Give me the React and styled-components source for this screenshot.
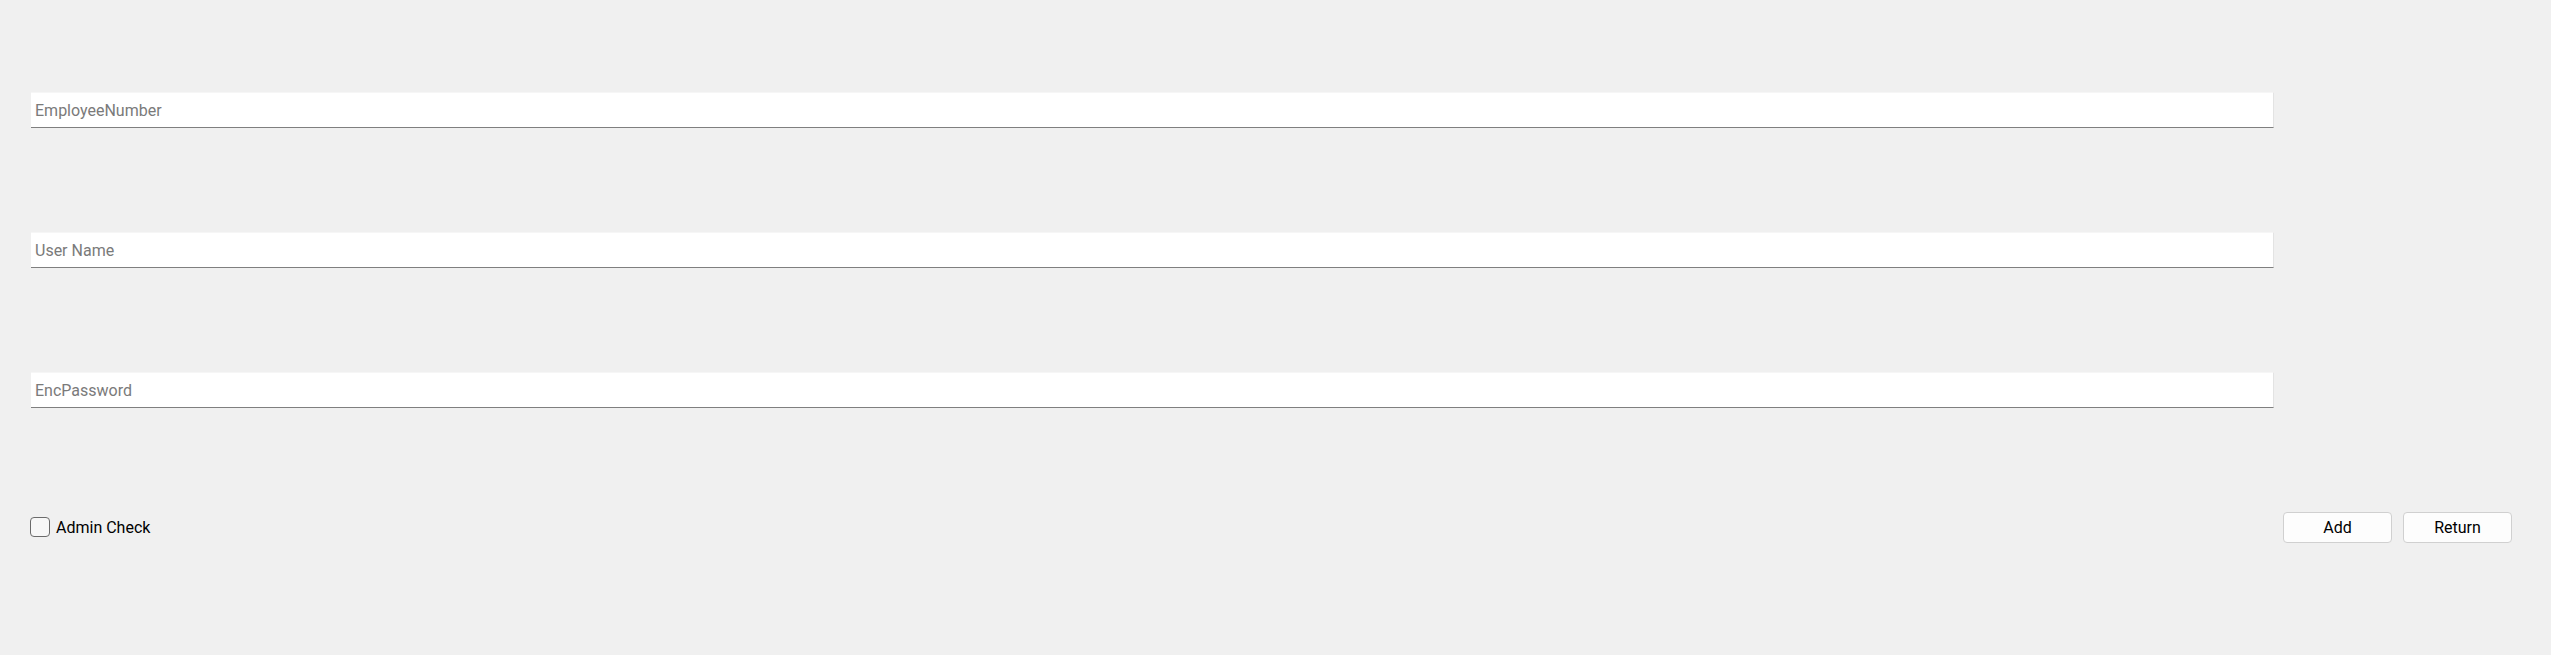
import React from "react";
import styled, { createGlobalStyle } from "styled-components";

const Global = createGlobalStyle`
  html, body { margin: 0; padding: 0; background: #f0f0f0; }
  body { font-family: Roboto, "Liberation Sans", sans-serif; }
`;

const Page = styled.div`
  width: 2551px;
  height: 655px;
  box-sizing: border-box;
  padding: 92px 39px 0 30px;
  display: flex;
  flex-direction: column;
  gap: 104px;
`;

const Field = styled.input`
  width: 2243px;
  height: 36px;
  margin: 0 0 0 1px;
  box-sizing: border-box;
  border: none;
  border-top: 1px solid #f6f6f6;
  border-right: 1px solid #e3e3e3;
  border-bottom: 1px solid #7f7f7f;
  background: #ffffff;
  padding: 1px 0 0 4px;
  font-family: Roboto, "Liberation Sans", sans-serif;
  font-size: 16px;
  color: #1a1a1a;
  outline: none;
  &::placeholder { color: #7a7a7a; }
`;

const Footer = styled.div`
  display: flex;
  align-items: center;
  justify-content: space-between;
  height: 31px;
`;

const CheckLabel = styled.label`
  display: flex;
  align-items: center;
  gap: 6px;
  font-size: 16px;
  color: #000;
  margin-top: -1px;
`;

const Box = styled.span`
  width: 20px;
  height: 20px;
  box-sizing: border-box;
  border: 1px solid #6b6b6b;
  border-radius: 4px;
  background: #f7f7f7;
`;

const Buttons = styled.div`
  display: flex;
  gap: 11px;
`;

const Button = styled.button`
  width: 109px;
  height: 31px;
  box-sizing: border-box;
  background: #fdfdfd;
  border: 1px solid #d0d0d0;
  border-radius: 4px;
  font-family: Roboto, "Liberation Sans", sans-serif;
  font-size: 16px;
  color: #000;
  padding: 0;
`;

export default function App() {
  return (
    <>
      <Global />
      <Page>
        <Field placeholder="EmployeeNumber" />
        <Field placeholder="User Name" />
        <Field placeholder="EncPassword" />
        <Footer>
          <CheckLabel>
            <Box />
            Admin Check
          </CheckLabel>
          <Buttons>
            <Button>Add</Button>
            <Button>Return</Button>
          </Buttons>
        </Footer>
      </Page>
    </>
  );
}
